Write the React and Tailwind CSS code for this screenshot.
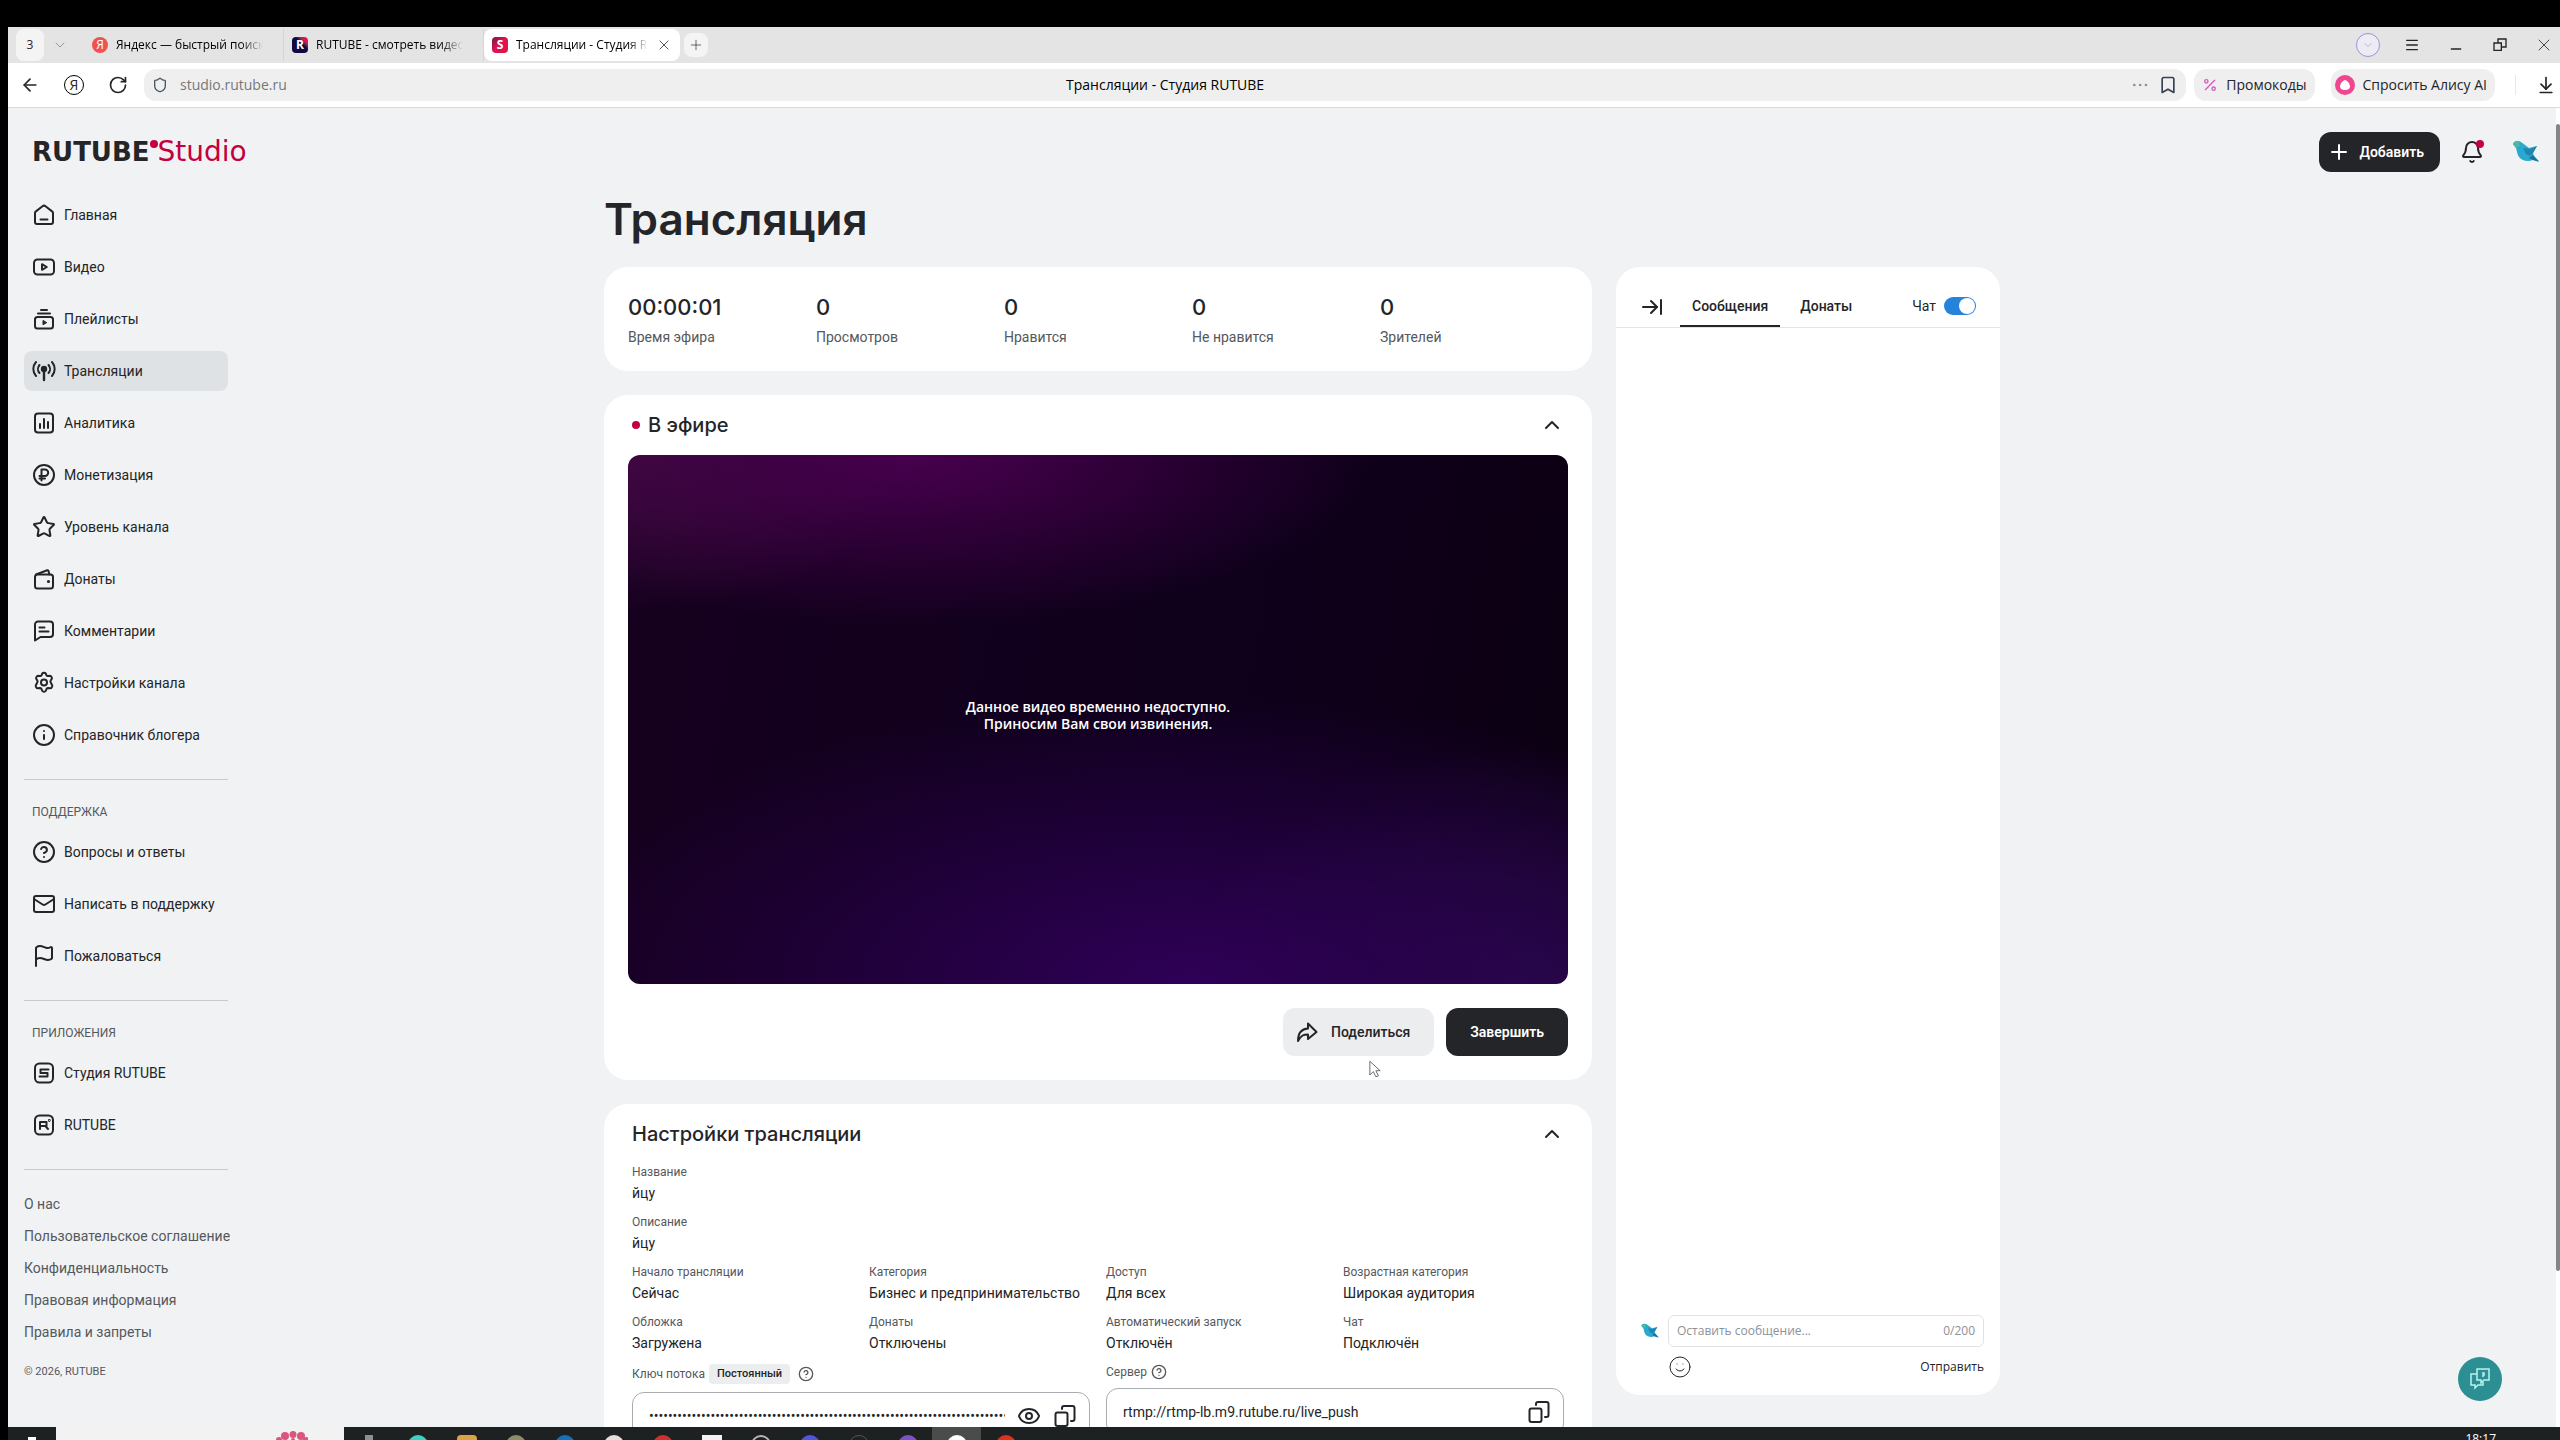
import React, { useState } from 'react';
import {
  ArrowLeft, ArrowRightToLine, ArrowDownToLine, Bell, Bookmark, ChevronDown, ChevronUp, CircleHelp,
  Ellipsis, Eye, Flag, Info, Mail, Menu, Minus, Percent, Plus, RotateCw, Shield, Smile, Star, X
} from 'lucide-react';
import { clsx } from 'clsx';

function Svg({ children, className = 'size-6' }) {
  return (
    <svg
      viewBox="0 0 24 24"
      fill="none"
      stroke="currentColor"
      strokeWidth="2"
      strokeLinecap="round"
      strokeLinejoin="round"
      className={clsx('shrink-0', className)}
      aria-hidden="true"
    >
      {children}
    </svg>
  );
}

const HomeIcon = () => (
  <Svg>
    <path d="M3 10.2c0-.8.3-1.4.9-1.8l6.6-5.2c.9-.7 2.1-.7 3 0l6.6 5.2c.6.4.9 1 .9 1.8V19a2 2 0 0 1-2 2H5a2 2 0 0 1-2-2z" />
    <path d="M8.5 16.5h7" />
  </Svg>
);

const VideoIcon = () => (
  <Svg>
    <rect x="2" y="4.5" width="20" height="15" rx="3.5" />
    <path d="M10 9.2v5.6l4.8-2.8z" />
  </Svg>
);

const PlaylistIcon = () => (
  <Svg>
    <rect x="3" y="10" width="18" height="11.5" rx="2.5" />
    <path d="M6 6.5h12M9 3h6" />
    <path d="M11 13.8v4l3.4-2z" fill="currentColor" strokeWidth="1" />
  </Svg>
);

const StreamIcon = () => (
  <Svg>
    <circle cx="12" cy="10" r="2.2" fill="currentColor" />
    <path d="M12 11v10" strokeWidth="2.4" />
    <path d="M7.500 14a6 6 0 0 1 0-8M16.500 6a6 6 0 0 1 0 8M4 17a10.500 10.500 0 0 1 0-14M20 3a10.500 10.500 0 0 1 0 14" />
  </Svg>
);

const AnalyticsIcon = () => (
  <Svg>
    <rect x="3" y="2.5" width="18" height="19" rx="3" />
    <path d="M8 13v4M12 8v9M16 11v6" />
  </Svg>
);

const RubleIcon = () => (
  <Svg>
    <circle cx="12" cy="12" r="10" />
    <path d="M9.5 17.5v-11H13a3.2 3.2 0 0 1 0 6.4H7.5M7.5 15.500H13" />
  </Svg>
);

const WalletIcon = () => (
  <Svg>
    <rect x="3" y="7.5" width="18" height="14" rx="2.5" />
    <path d="M4 7.5 15.2 3.2a1 1 0 0 1 1.3.7l.9 3.6" />
    <circle cx="16.5" cy="14.5" r=".6" fill="currentColor" />
  </Svg>
);

const CommentIcon = () => (
  <Svg>
    <path d="M3 21.5V5.5a3 3 0 0 1 3-3h12a3 3 0 0 1 3 3V15a3 3 0 0 1-3 3H8.5z" />
    <path d="M7.5 8.5h5M7.5 12.5h9" />
  </Svg>
);

const GearIcon = () => (
  <Svg>
    <path d="M10.3 2.5c.5-1 2.9-1 3.4 0l.8 1.7c.3.6.9.9 1.5.8l2-.2c1.1 0 2.4 2 1.8 3l-1.1 1.8c-.4.7-.4 1.200 0 1.900l1.500 2.800c.5 1-.8 3.100-1.900 3l-2.200-.3c-.7 0-1.200.3-1.500.9l-.9 2c-.5 1-2.900 1-3.400 0l-.9-2c-.3-.6-.8-.9-1.500-.9l-2.200.3c-1.100.1-2.400-2-1.900-3l1.500-2.800c.4-.7.4-1.200 0-1.900L4.200 7.800c-.6-1 .7-3 1.800-3l2 .2c.6.1 1.200-.2 1.500-.8z" />
    <circle cx="12" cy="11.5" r="3" />
  </Svg>
);

const StudioAppIcon = () => (
  <Svg>
    <rect x="3" y="2.5" width="18" height="19" rx="4.5" />
    <path d="M16.5 8.5h-8V12h7v3.5h-8" />
  </Svg>
);

const RutubeAppIcon = () => (
  <Svg>
    <rect x="3" y="2.5" width="18" height="19" rx="4.5" />
    <path d="M8 16V9h6.500v4H8M13.500 13l2.500 3" />
    <circle cx="17.3" cy="7.5" r=".4" />
  </Svg>
);

const ShareIcon = () => (
  <Svg>
    <path d="M13 3.5 21.5 12 13 19v-4.5c-4.500 0-6.500.5-10 6.500C3 14 5.500 9 13 8.500z" />
  </Svg>
);

const CopyIcon = () => (
  <Svg>
    <rect x="2.5" y="8.5" width="12" height="13.5" rx="2" />
    <path d="M9 5V4a2 2 0 0 1 2-2h8.5a2 2 0 0 1 2 2v11a2 2 0 0 1-2 2H18" />
  </Svg>
);

function Bird({ className }) {
  return (
    <svg viewBox="0 0 28 24" className={clsx('shrink-0', className)} aria-hidden="true">
      <path d="M1 4c1-3 5-4 8-2l8 6 8-2-4 7 1 3 5 5-6-1c-5 2-11 1-14-3-2-3-2-6-3-9z" fill="#2aa9d0" />
      <path d="M11 8l7 1 7-3-4 7-3 3-4-2z" fill="#2384ad" />
      <path d="M17 18l4-3 6 7-6-2z" fill="#1f6f9c" />
      <path d="M1 4c1-3 4-4 6-2l1 4-4 2z" fill="#4bb8a4" />
    </svg>
  );
}

const mainLinks = [
  { name: 'Главная', icon: HomeIcon },
  { name: 'Видео', icon: VideoIcon },
  { name: 'Плейлисты', icon: PlaylistIcon },
  { name: 'Трансляции', icon: StreamIcon, active: true },
  { name: 'Аналитика', icon: AnalyticsIcon },
  { name: 'Монетизация', icon: RubleIcon },
  { name: 'Уровень канала', icon: Star },
  { name: 'Донаты', icon: WalletIcon },
  { name: 'Комментарии', icon: CommentIcon },
  { name: 'Настройки канала', icon: GearIcon },
  { name: 'Справочник блогера', icon: Info }
];

const supportLinks = [
  { name: 'Вопросы и ответы', icon: CircleHelp },
  { name: 'Написать в поддержку', icon: Mail },
  { name: 'Пожаловаться', icon: Flag }
];

const appLinks = [
  { name: 'Студия RUTUBE', icon: StudioAppIcon },
  { name: 'RUTUBE', icon: RutubeAppIcon }
];

const legalLinks = [
  'О нас',
  'Пользовательское соглашение',
  'Конфиденциальность',
  'Правовая информация',
  'Правила и запреты'
];

const stats = [
  { value: '00:00:01', label: 'Время эфира' },
  { value: '0', label: 'Просмотров' },
  { value: '0', label: 'Нравится' },
  { value: '0', label: 'Не нравится' },
  { value: '0', label: 'Зрителей' }
];

const settings = [
  { label: 'Название', value: 'йцу', wide: true },
  { label: 'Описание', value: 'йцу', wide: true },
  { label: 'Начало трансляции', value: 'Сейчас' },
  { label: 'Категория', value: 'Бизнес и предпринимательство' },
  { label: 'Доступ', value: 'Для всех' },
  { label: 'Возрастная категория', value: 'Широкая аудитория' },
  { label: 'Обложка', value: 'Загружена' },
  { label: 'Донаты', value: 'Отключены' },
  { label: 'Автоматический запуск', value: 'Отключён' },
  { label: 'Чат', value: 'Подключён' }
];

function BrowserTab({ title, icon, active }) {
  return (
    <div className={clsx(
      'flex h-8 items-center gap-2 px-2 text-xs text-black',
      active ? 'w-[196px] rounded-lg bg-white' : 'w-[200px] border-r border-[#d4d4d4] pr-5'
    )}>
      {icon}
      <span className="min-w-0 flex-1 overflow-hidden whitespace-nowrap mask-r-from-85%">{title}</span>
      {active && <button aria-label="Закрыть вкладку"><X className="size-4" strokeWidth={1} /></button>}
    </div>
  );
}

function BrowserChrome() {
  return (
    <header className="font-['Open_Sans',sans-serif]">
      <div className="flex h-9 items-center bg-[#e4e4e4] pl-2">
        <button className="h-8 w-7 rounded-lg bg-[#f4f4f4] text-xs">3</button>
        <button className="mr-2 flex w-8 justify-center" aria-label="Список вкладок">
          <ChevronDown className="size-4 text-gray-500" strokeWidth={1} />
        </button>
        <BrowserTab
          title="Яндекс — быстрый поиск"
          icon={<span className="flex size-4 items-center justify-center rounded-full bg-[#ef5350] text-xs text-white">Я</span>}
        />
        <BrowserTab
          title="RUTUBE - смотреть видео"
          icon={<span className="flex size-4 items-center justify-center rounded-sm bg-linear-to-bl from-[#e0144c] from-20% to-[#100943] to-40% text-xs font-bold text-white">R</span>}
        />
        <BrowserTab
          active
          title="Трансляции - Студия RUTUBE"
          icon={<span className="flex size-4 items-center justify-center rounded-sm bg-linear-to-br from-[#7a1148] to-[#e0144c] to-50% text-xs font-bold text-white">S</span>}
        />
        <button className="ml-1 flex size-6 items-center justify-center rounded-lg bg-[#f4f4f4]" aria-label="Новая вкладка">
          <Plus className="size-4" strokeWidth={1} />
        </button>
        <div className="ml-auto flex items-center gap-5 pr-1">
          <span className="flex size-6 items-center justify-center rounded-full border border-[#a98bd8] bg-[#ececf4]">
            <ChevronDown className="size-3 text-[#b9b4cc]" />
          </span>
          <button className="flex size-6 items-center justify-center" aria-label="Меню"><Menu className="size-4" strokeWidth={2} /></button>
          <button className="flex size-6 items-end justify-center" aria-label="Свернуть"><Minus className="size-4" strokeWidth={2} /></button>
          <button className="flex size-6 items-center justify-center" aria-label="Развернуть">
            <Svg className="size-4"><path d="M3 9h11v11H3zM9 9V3h12v12h-7" strokeLinejoin="miter" /></Svg>
          </button>
          <button className="flex size-6 items-center justify-center" aria-label="Закрыть"><X className="size-5" strokeWidth={1} /></button>
        </div>
      </div>

      <div className="flex h-[45px] items-center border-b border-[#d9dadb] bg-white pl-3 pr-1">
        <button aria-label="Назад"><ArrowLeft className="size-5" strokeWidth={2} /></button>
        <button className="ml-6 flex size-5 items-center justify-center rounded-full border border-black text-sm">Я</button>
        <button className="ml-6 mr-4" aria-label="Обновить"><RotateCw className="size-5" strokeWidth={2} /></button>
        <div className="flex h-8 flex-1 items-center rounded-xl bg-[#efefef] px-2">
          <div className="flex flex-1 items-center gap-3">
            <Shield className="size-4 text-gray-600" strokeWidth={2} />
            <span className="text-sm text-[#777]">studio.rutube.ru</span>
          </div>
          <span className="text-sm text-black">Трансляции - Студия RUTUBE</span>
          <div className="flex flex-1 items-center justify-end gap-2">
            <button aria-label="Ещё"><Ellipsis className="size-5 text-gray-500" strokeWidth={1} /></button>
            <button aria-label="В закладки"><Bookmark className="size-5 text-gray-700" strokeWidth={2} /></button>
          </div>
        </div>
        <button className="ml-2 flex h-8 items-center gap-2 rounded-xl bg-[#efefef] px-2 text-sm">
          <Percent className="size-4 text-[#d45bc0]" />
          Промокоды
        </button>
        <button className="ml-4 flex h-8 items-center gap-2 rounded-xl bg-[#efefef] pl-1 pr-2 text-sm">
          <svg viewBox="0 0 20 20" className="size-5" aria-hidden="true">
            <circle cx="10" cy="10" r="10" fill="#f0458f" />
            <path d="M10 5c2 0 5 4 5 6.500S12.500 15 10 15s-5-1-5-3.500S8 5 10 5z" fill="#fff" />
          </svg>
          Спросить Алису AI
        </button>
        <span className="ml-5 h-5 w-px bg-gray-200" />
        <button className="ml-5" aria-label="Загрузки"><ArrowDownToLine className="size-5" strokeWidth={2} /></button>
      </div>
    </header>
  );
}

function NavLink({ link }) {
  return (
    <a
      href="#"
      className={clsx(
        'flex h-10 items-center gap-2 whitespace-nowrap rounded-lg px-2 text-sm text-[#232528]',
        link.active && 'bg-[#dfe2e5]'
      )}
    >
      <link.icon className="size-6 shrink-0" />
      {link.name}
    </a>
  );
}

function Sidebar() {
  return (
    <aside className="flex w-[204px] shrink-0 flex-col">
      <nav className="flex flex-col gap-3 border-b border-[#c9cccf] pb-6">
        {mainLinks.map(link => <NavLink key={link.name} link={link} />)}
      </nav>
      <nav className="flex flex-col gap-3 border-b border-[#c9cccf] pb-6 pt-6">
        <h2 className="px-2 text-xs leading-4 text-[#55585c]">ПОДДЕРЖКА</h2>
        {supportLinks.map(link => <NavLink key={link.name} link={link} />)}
      </nav>
      <nav className="flex flex-col gap-3 border-b border-[#c9cccf] pb-6 pt-6">
        <h2 className="px-2 text-xs leading-4 text-[#55585c]">ПРИЛОЖЕНИЯ</h2>
        {appLinks.map(link => <NavLink key={link.name} link={link} />)}
      </nav>
      <nav className="flex flex-col gap-3 whitespace-nowrap pt-6 text-sm text-[#55585c]">
        {legalLinks.map(name => <a key={name} href="#">{name}</a>)}
      </nav>
      <p className="mt-5 text-[11px] leading-5 text-[#55585c]">© 2026, RUTUBE</p>
    </aside>
  );
}

function StatsCard() {
  return (
    <section className="grid grid-cols-5 rounded-3xl bg-white px-6 py-6">
      {stats.map(stat => (
        <div key={stat.label}>
          <p className="font-['Inter',sans-serif] text-[22px] leading-8 font-medium text-[#232528]">{stat.value}</p>
          <p className="mt-1 text-sm text-[#55585c]">{stat.label}</p>
        </div>
      ))}
    </section>
  );
}

function LiveCard() {
  return (
    <section className="rounded-3xl bg-white px-6 pb-6">
      <div className="flex h-[60px] items-center gap-2 px-1">
        <span className="size-2 rounded-full bg-[#c4003f]" />
        <h2 className="font-['Inter',sans-serif] text-xl font-medium">В эфире</h2>
        <button className="ml-auto" aria-label="Свернуть эфир"><ChevronUp className="size-6" /></button>
      </div>
      <div className="flex aspect-video items-center justify-center rounded-xl bg-[radial-gradient(ellipse_50%_32%_at_30%_0%,#48004e,transparent),radial-gradient(ellipse_30%_30%_at_0%_0%,#3a0c3a,transparent),radial-gradient(ellipse_70%_55%_at_60%_100%,#2f0058,transparent),radial-gradient(ellipse_35%_45%_at_95%_100%,#220a40,transparent),linear-gradient(100deg,#16001f,#0f001c_60%,#0c0012)] pb-2">
        <p className="text-center font-['Open_Sans',sans-serif] text-sm leading-[17px] font-semibold text-white">
          Данное видео временно недоступно.<br />Приносим Вам свои извинения.
        </p>
      </div>
      <div className="mt-6 flex justify-end gap-3">
        <button className="flex h-12 items-center gap-3 rounded-xl bg-[#ecedef] px-3 pr-6 text-sm font-medium">
          <ShareIcon />
          Поделиться
        </button>
        <button className="h-12 rounded-xl bg-[#232528] px-6 text-sm font-semibold text-white">Завершить</button>
      </div>
    </section>
  );
}

function SettingsCard() {
  return (
    <section className="rounded-3xl bg-white px-7 pb-8">
      <div className="flex h-[60px] items-center">
        <h2 className="font-['Inter',sans-serif] text-xl font-medium">Настройки трансляции</h2>
        <button className="ml-auto" aria-label="Свернуть настройки"><ChevronUp className="size-6" /></button>
      </div>
      <dl className="grid grid-cols-4 gap-x-4 gap-y-3">
        {settings.map(item => (
          <div key={item.label} className={clsx('whitespace-nowrap', item.wide && 'col-span-4')}>
            <dt className="text-xs leading-4 text-[#55585c]">{item.label}</dt>
            <dd className="mt-1 text-sm leading-[18px] text-[#232528]">{item.value}</dd>
          </div>
        ))}
      </dl>
      <div className="mt-3 grid grid-cols-2 gap-x-4">
        <div>
          <div className="flex h-5 items-center gap-1 text-xs text-[#55585c]">
            <label htmlFor="stream-key">Ключ потока</label>
            <span className="rounded-sm bg-[#ecedef] px-2 text-[11px] leading-5 font-medium text-[#232528]">Постоянный</span>
            <CircleHelp className="ml-1 size-4" strokeWidth={2} />
          </div>
          <div className="mt-2 flex h-12 items-center gap-3 rounded-xl border border-[#a9acb0] pl-4 pr-3">
            <input
              id="stream-key"
              type="password"
              readOnly
              className="min-w-0 flex-1 text-sm outline-none"
              defaultValue="000000000000000000000000000000000000000000000000000000000000000000000000000000"
            />
            <button aria-label="Показать ключ"><Eye className="size-6" /></button>
            <button aria-label="Скопировать ключ"><CopyIcon /></button>
          </div>
        </div>
        <div>
          <div className="flex h-4 items-center gap-1 text-xs text-[#55585c]">
            <label htmlFor="stream-server">Сервер</label>
            <CircleHelp className="size-4" strokeWidth={2} />
          </div>
          <div className="mt-2 flex h-12 items-center gap-3 rounded-xl border border-[#a9acb0] pl-4 pr-3">
            <input
              id="stream-server"
              readOnly
              className="min-w-0 flex-1 text-sm outline-none"
              defaultValue="rtmp://rtmp-lb.m9.rutube.ru/live_push"
            />
            <button aria-label="Скопировать сервер"><CopyIcon /></button>
          </div>
        </div>
      </div>
    </section>
  );
}

function ChatPanel() {
  const [enabled, setEnabled] = useState(true);

  return (
    <section className="flex h-[calc(100vh-312px)] w-96 shrink-0 flex-col rounded-3xl bg-white">
      <div className="flex h-[61px] items-end border-b border-[#e3e5e7] px-6 text-sm">
        <button className="mb-2 mr-4 flex h-6 items-center" aria-label="Скрыть чат"><ArrowRightToLine className="size-6" /></button>
        <button className="h-10 border-b-2 border-[#232528] px-3 font-medium">Сообщения</button>
        <button className="h-10 border-b-2 border-transparent px-5 font-medium">Донаты</button>
        <label className="ml-auto flex h-10 cursor-pointer items-center gap-2 border-b-2 border-transparent">
          Чат
          <input
            type="checkbox"
            role="switch"
            className="peer sr-only"
            checked={enabled}
            onChange={e => setEnabled(e.target.checked)}
          />
          <span className="flex h-[18px] w-8 items-center rounded-full bg-gray-300 px-px peer-checked:justify-end peer-checked:bg-[#2583dc]">
            <span className="size-4 rounded-full bg-white" />
          </span>
        </label>
      </div>
      <div className="flex-1" />
      <form className="flex gap-2 pb-3 pl-6 pr-4">
        <Bird className="mt-2 h-4 w-5" />
        <div className="flex-1">
          <div className="flex h-8 items-center rounded-md border border-[#e0e3e6] px-2 font-['Open_Sans',sans-serif] text-xs text-[#8b9299]">
            <input
              className="min-w-0 flex-1 outline-none placeholder:text-[#8b9299]"
              placeholder="Оставить сообщение..."
              aria-label="Сообщение"
            />
            0/200
          </div>
          <div className="mt-1 flex h-8 items-center justify-between">
            <button type="button" aria-label="Смайлы"><Smile className="size-6" strokeWidth={1} /></button>
            <button type="button" className="font-['Open_Sans',sans-serif] text-xs font-medium">Отправить</button>
          </div>
        </div>
      </form>
    </section>
  );
}

const taskbarApps = [
  'bg-[#8d9090]', 'rounded-full bg-[#3fd0c4]', 'rounded-sm bg-[#d9a441]', 'rounded-full bg-[#8c8b6a]',
  'rounded-full bg-[#1473b8]', 'rounded-full bg-[#e8dcdc]', 'rounded-full bg-[#d0312d]', 'bg-[#f2f2f2]',
  'rounded-full border-2 border-[#b5b5b5]', 'rounded-full bg-[#5055dd]', 'rounded-full border border-[#555]',
  'rounded-full bg-[#7b52c9]', 'rounded-full bg-white', 'rounded-full bg-[#e0301e]'
];

function Taskbar() {
  return (
    <footer className="flex h-[13px] shrink-0 items-start overflow-hidden bg-[#1d2122]">
      <div className="flex w-12 shrink-0 justify-center pt-2.5"><span className="h-3 w-2 bg-white" /></div>
      <div className="flex h-full w-72 shrink-0 justify-end bg-[#f2f2f2] px-9 pt-1">
        <svg viewBox="0 0 32 9" className="h-[9px] w-8" fill="#d9567e" aria-hidden="true">
          <circle cx="9" cy="5" r="4" />
          <circle cx="17" cy="3.500" r="3.500" />
          <circle cx="25" cy="5" r="4" />
          <circle cx="3" cy="9" r="3" />
          <circle cx="30" cy="9" r="3" />
          <circle cx="17" cy="9" r="2" />
        </svg>
      </div>
      {taskbarApps.map((app, i) => (
        <div key={i} className={clsx('flex h-full w-[49px] shrink-0 justify-center pt-2', i === 12 && 'bg-[#4a4c4c]')}>
          <span className={clsx('shrink-0', i === 0 ? 'size-2' : 'size-5', app)} />
        </div>
      ))}
      <div className="ml-auto pr-16 pt-1 font-['Open_Sans',sans-serif] text-xs text-white">18:17</div>
    </footer>
  );
}

export default function App() {
  return (
    <div className="flex h-screen flex-col overflow-hidden bg-black pl-2 pt-[27px] font-['Roboto',sans-serif] text-[#232528]">
      <BrowserChrome />

      <div className="relative flex min-h-0 flex-1 overflow-hidden bg-[#f1f2f4]">
        <div className="min-w-0 flex-1 overflow-hidden pl-4 pr-4">
          {/* Top bar */}
          <div className="flex h-[87px] items-center pl-2">
            <a href="#" className="flex items-start">
              <span className="font-['DejaVu_Sans',sans-serif] text-[26px] leading-8 font-bold">RUTUBE</span>
              <span className="mt-1 size-2 rounded-full bg-[#c4003f]" />
              <span className="font-['DejaVu_Sans',sans-serif] text-[28px] leading-8 font-normal text-[#c4003f]">Studio</span>
            </a>
            <button className="ml-auto flex h-10 items-center gap-2 rounded-xl bg-[#232528] px-2 pr-4 text-sm font-semibold text-white">
              <Plus className="size-6" />
              Добавить
            </button>
            <button className="relative ml-5 size-6" aria-label="Уведомления">
              <Bell className="size-6" />
              <span className="absolute right-0 top-0 size-2 rounded-full bg-[#c4003f]" />
            </button>
            <button className="ml-7" aria-label="Профиль"><Bird className="h-6 w-7" /></button>
          </div>

          <div className="flex">
            <Sidebar />
            <main className="min-w-0 flex-1 pl-9 pr-[200px]">
              <div className="mx-auto max-w-[1396px]">
                <h1 className="font-['Inter',sans-serif] text-[44px] leading-[48px] font-semibold">Трансляция</h1>
                <div className="mt-6 flex items-start gap-6">
                  <div className="flex min-w-0 flex-1 flex-col gap-6">
                    <StatsCard />
                    <LiveCard />
                    <SettingsCard />
                  </div>
                  <ChatPanel />
                </div>
              </div>
            </main>
          </div>
        </div>

        {/* Scrollbar */}
        <div className="flex w-1 flex-col bg-white pt-4"><span className="h-[88%] rounded-full bg-[#858585]" /></div>

        <button className="absolute bottom-[26px] right-[58px] flex size-11 items-center justify-center rounded-full bg-[#2b8f93] text-[#b9f3ee]" aria-label="Помощь">
          <svg viewBox="0 0 24 24" className="size-6" fill="none" stroke="currentColor" strokeWidth="1.5" aria-hidden="true">
            <path d="M9 2h12v11h-5l-3 3v-3H9z" />
            <path d="M9 7H3v11h4v3l3-3h5v-3" />
            <path d="M14 6h2v2h-1v2" />
          </svg>
        </button>

        {/* Mouse pointer */}
        <svg viewBox="0 0 14 20" className="pointer-events-none absolute left-[1361px] top-[951px] h-5 w-3" aria-hidden="true">
          <path d="M1 1v16l4-4 3 6 3-1-3-6h5z" fill="#fff" stroke="#555" />
        </svg>
      </div>

      <Taskbar />
    </div>
  );
}
